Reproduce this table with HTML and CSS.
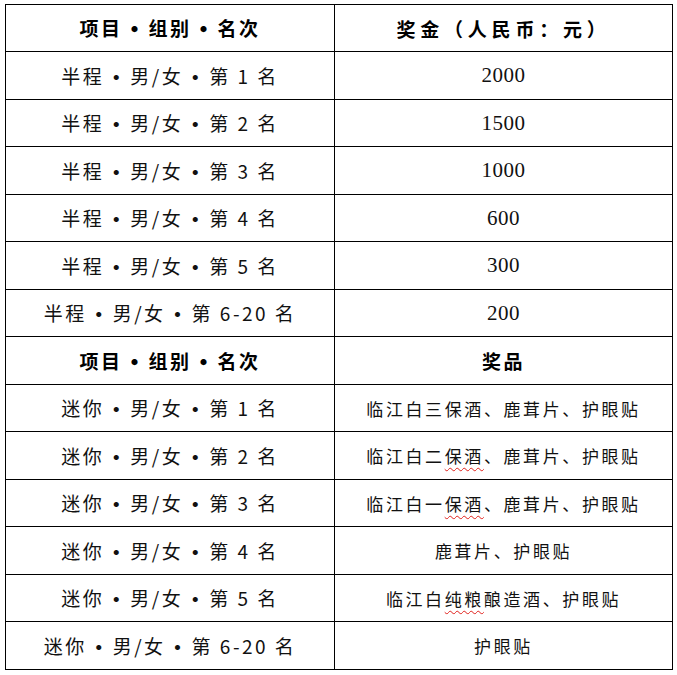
FILE: index.html
```html
<!DOCTYPE html>
<html lang="zh-CN">
<head>
<meta charset="utf-8">
<title>奖金表</title>
<link rel="stylesheet" href="styles.css">
</head>
<body>
<table class="prize-table">
  <colgroup><col class="col-a"><col class="col-b"></colgroup>
  <tbody>
    <tr class="head"><td>项目<span class="dot">•</span>组别<span class="dot">•</span>名次</td><td class="wide">奖金（人民币：元）</td></tr>
    <tr><td>半程<span class="dot">•</span>男/女<span class="dot">•</span>第 1 名</td><td class="num">2000</td></tr>
    <tr><td>半程<span class="dot">•</span>男/女<span class="dot">•</span>第 2 名</td><td class="num">1500</td></tr>
    <tr><td>半程<span class="dot">•</span>男/女<span class="dot">•</span>第 3 名</td><td class="num">1000</td></tr>
    <tr><td>半程<span class="dot">•</span>男/女<span class="dot">•</span>第 4 名</td><td class="num">600</td></tr>
    <tr><td>半程<span class="dot">•</span>男/女<span class="dot">•</span>第 5 名</td><td class="num">300</td></tr>
    <tr><td>半程<span class="dot">•</span>男/女<span class="dot">•</span>第 6-20 名</td><td class="num">200</td></tr>
    <tr class="head"><td>项目<span class="dot">•</span>组别<span class="dot">•</span>名次</td><td>奖品</td></tr>
    <tr><td>迷你<span class="dot">•</span>男/女<span class="dot">•</span>第 1 名</td><td class="gift">临江白三保酒、鹿茸片、护眼贴</td></tr>
    <tr><td>迷你<span class="dot">•</span>男/女<span class="dot">•</span>第 2 名</td><td class="gift">临江白二<span class="spell">保酒</span>、鹿茸片、护眼贴</td></tr>
    <tr><td>迷你<span class="dot">•</span>男/女<span class="dot">•</span>第 3 名</td><td class="gift">临江白一<span class="spell">保酒</span>、鹿茸片、护眼贴</td></tr>
    <tr><td>迷你<span class="dot">•</span>男/女<span class="dot">•</span>第 4 名</td><td class="gift">鹿茸片、护眼贴</td></tr>
    <tr><td>迷你<span class="dot">•</span>男/女<span class="dot">•</span>第 5 名</td><td class="gift">临江白<span class="spell">纯粮</span>酿造酒、护眼贴</td></tr>
    <tr><td>迷你<span class="dot">•</span>男/女<span class="dot">•</span>第 6-20 名</td><td class="gift">护眼贴</td></tr>
  </tbody>
</table>
</body>
</html>
```
FILE: styles.css
```css
html, body {
  margin: 0;
  padding: 0;
  background: #fff;
}
body {
  padding: 4px 0 0 5px;
  font-family: "Noto Sans CJK SC", sans-serif;
  color: #111;
}
.prize-table {
  border-collapse: collapse;
  table-layout: fixed;
  width: 667px;
}
.col-a { width: 329px; }
.col-b { width: 338px; }
.prize-table td {
  border: 1px solid #000;
  height: 46px;
  padding: 0;
  text-align: center;
  vertical-align: middle;
  font-size: 19px;
  letter-spacing: 2.5px;
  font-weight: 400;
  line-height: 1;
}
.prize-table tr:nth-child(even) td {
  height: 47px;
}
.prize-table tr.head td {
  font-weight: 700;
  color: #000;
}
.prize-table tr.head td.wide {
  letter-spacing: 4.8px;
}
.dot {
  display: inline-block;
  width: 24px;
  margin: 0 2px 0 0;
  text-align: center;
  letter-spacing: 0;
  font-size: 24px;
  line-height: 1;
  vertical-align: -2px;
}
.prize-table td.num {
  font-family: "Liberation Serif", serif;
  font-size: 21px;
  letter-spacing: 0.5px;
}
.prize-table td.gift {
  font-size: 17px;
  letter-spacing: 2.6px;
}
.spell {
  text-decoration: underline wavy #e0201b;
  text-decoration-thickness: 1px;
  text-underline-offset: 4px;
}
```
